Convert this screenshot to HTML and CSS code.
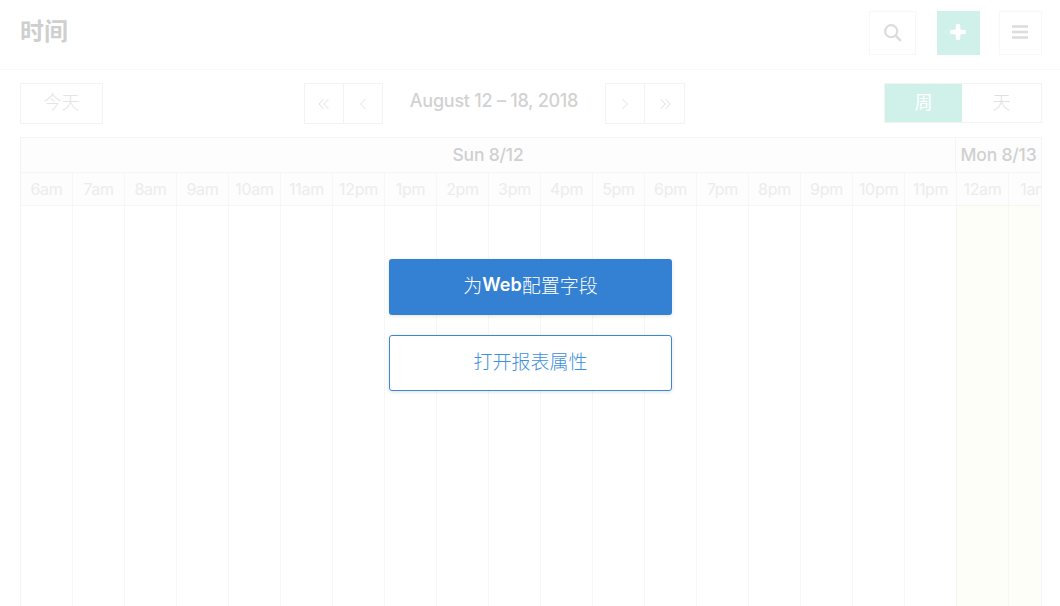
FILE: index.html
```html
<!DOCTYPE html>
<html lang="zh">
<head>
  <meta charset="UTF-8">
  <title>时间</title>
  <link rel="stylesheet" href="styles.css">
</head>
<body>
  <header class="topbar">
    <h1>时间</h1>
    <div class="actions">
      <button class="icon-btn search-btn">
        <svg width="18" height="18" viewBox="0 0 18 18"><circle cx="7.200" cy="7.200" r="6" fill="none" stroke="#dcdcdc" stroke-width="2.200"/><path d="M11.600 11.600L16.800 16.800" stroke="#dcdcdc" stroke-width="2.600"/></svg>
      </button>
      <button class="icon-btn add-btn">
        <svg width="16" height="16" viewBox="0 0 16 16"><path d="M8 2v12M2 8h12" stroke="#fff" stroke-width="4.600" stroke-linecap="round"/></svg>
      </button>
      <button class="icon-btn menu-btn">
        <svg width="16" height="14" viewBox="0 0 16 14"><path d="M0 1.500h16M0 7h16M0 12.500h16" stroke="#dcdcdc" stroke-width="2.600"/></svg>
      </button>
    </div>
  </header>

  <div class="toolbar">
    <button class="today-btn">今天</button>
    <div class="date-nav">
      <div class="btn-group">
        <button class="nav-btn"><svg width="12" height="12" viewBox="0 0 12 12"><path d="M5.500 1L1 6l4.500 5M10.500 1L6 6l4.500 5" class="chev"/></svg></button>
        <button class="nav-btn"><svg width="12" height="12" viewBox="0 0 12 12"><path d="M8.500 1L3.500 6l5 5" class="chev"/></svg></button>
      </div>
      <span class="date-range">August 12 – 18, 2018</span>
      <div class="btn-group next-group">
        <button class="nav-btn"><svg width="12" height="12" viewBox="0 0 12 12"><path d="M3.500 1L8.500 6l-5 5" class="chev"/></svg></button>
        <button class="nav-btn"><svg width="12" height="12" viewBox="0 0 12 12"><path d="M1.500 1L6 6l-4.500 5M6.500 1L11 6l-4.500 5" class="chev"/></svg></button>
      </div>
    </div>
    <div class="view-switch">
      <button class="view-btn active">周</button>
      <button class="view-btn">天</button>
    </div>
  </div>

  <div class="calendar">
    <div class="day-row">
      <div class="day sun">Sun 8/12</div>
      <div class="day mon">Mon 8/13</div>
    </div>
    <div class="hour-row" id="hours"></div>
    <div class="body-row" id="cols"></div>
  </div>

  <div class="overlay">
    <button class="primary-btn">为<b>Web</b>配置字段</button>
    <button class="outline-btn">打开报表属性</button>
  </div>

  <script>
    const hours = ['6am','7am','8am','9am','10am','11am','12pm','1pm','2pm','3pm','4pm','5pm','6pm','7pm','8pm','9pm','10pm','11pm','12am','1am'];
    const hourRow = document.getElementById('hours');
    const cols = document.getElementById('cols');

    hours.forEach((h, i) => {
      const cell = document.createElement('div');
      cell.className = 'hour';
      cell.textContent = h;
      hourRow.appendChild(cell);

      const col = document.createElement('div');
      col.className = i >= 18 ? 'col next-day' : 'col';
      cols.appendChild(col);
    });
  </script>
</body>
</html>
```
FILE: styles.css
```css
* {
  box-sizing: border-box;
}
html, body {
  height: 100%;
}
body {
  margin: 0;
  overflow: hidden;
  display: flex;
  flex-direction: column;
  background: #fff;
  font-family: Inter, "Noto Sans CJK SC", sans-serif;
  color: #d0d0d0;
}
button {
  font-family: inherit;
  background: #fff;
  padding: 0;
  display: flex;
  align-items: center;
  justify-content: center;
}
.topbar {
  height: 70px;
  flex: none;
  border-bottom: 1px solid #f7f7f7;
  display: flex;
  justify-content: space-between;
  padding: 11px 18px 0 20px;
}
h1 {
  margin: 0;
  font-size: 24px;
  line-height: 42px;
  font-weight: 700;
  color: #cfcfcf;
}
.actions {
  display: flex;
  align-items: flex-start;
}
.icon-btn {
  height: 44px;
  border: 1px solid #f7f7f7;
}
.search-btn {
  width: 47px;
}
.add-btn {
  width: 43px;
  margin-left: 21px;
  background: #d0f1ea;
  border-color: #d0f1ea;
  padding: 0 2px 2px 0;
}
.menu-btn {
  width: 43px;
  margin-left: 19px;
  padding: 0 2px 2px 0;
}
.toolbar {
  flex: none;
  height: 41px;
  margin-top: 13px;
  padding: 0 18px 0 20px;
  display: flex;
  align-items: flex-start;
  position: relative;
}
.today-btn {
  width: 83px;
  height: 41px;
  border: 1px solid #f3f3f3;
  padding-bottom: 5px;
  font-size: 18px;
  font-weight: 300;
  color: #e4e4e4;
}
.date-nav {
  display: flex;
  align-items: flex-start;
  margin-left: 201px;
}
.btn-group {
  display: flex;
}
.nav-btn {
  width: 40px;
  height: 41px;
  border: 1px solid #f3f3f3;
}
.nav-btn + .nav-btn {
  width: 39px;
  border-left: 0;
}
.next-group .nav-btn + .nav-btn {
  width: 40px;
}
.chev {
  fill: none;
  stroke: #e2e2e2;
  stroke-width: 1;
}
.date-range {
  width: 222px;
  text-align: center;
  font-size: 18px;
  line-height: 36px;
  letter-spacing: -0.25px;
  font-weight: 500;
  color: #d2d2d2;
  white-space: nowrap;
}
.view-switch {
  display: flex;
  width: 158px;
  height: 40px;
  margin-left: auto;
  border: 1px solid #f3f3f3;
}
.view-btn {
  flex: 1;
  border: 0;
  padding-bottom: 5px;
  font-size: 18px;
  font-weight: 300;
  color: #e0e0e0;
}
.view-btn.active {
  flex: none;
  width: 77px;
  background: #d0f1ea;
  color: #fff;
  font-weight: 400;
}
.calendar {
  flex: 1;
  margin: 13px 18px 0 20px;
  border-left: 1px solid #f5f5f5;
  border-right: 1px solid #f5f5f5;
  display: flex;
  flex-direction: column;
  overflow: hidden;
  min-height: 0;
}
.day-row {
  flex: none;
  height: 36px;
  display: flex;
  border-top: 1px solid #f5f5f5;
  border-bottom: 1px solid #f5f5f5;
  background: #fdfdfd;
}
.day {
  text-align: center;
  font-size: 17.500px;
  line-height: 34px;
  letter-spacing: -0.2px;
  font-weight: 500;
  color: #d0d0d0;
}
.sun {
  flex: none;
  width: 935px;
  border-right: 1px solid #f5f5f5;
}
.mon {
  flex: none;
  width: 85px;
  white-space: nowrap;
}
.hour-row, .body-row {
  display: flex;
  background: #fdfdfd;
}
.hour-row {
  flex: none;
  height: 33px;
  border-bottom: 1px solid #f5f5f5;
}
.body-row {
  flex: 1;
  background: #fff;
}
.hour, .col {
  flex: none;
  width: 52px;
  border-right: 1px solid #f6f6f6;
}
.hour {
  text-align: center;
  font-size: 16px;
  line-height: 32px;
  letter-spacing: -0.3px;
  color: #ececec;
  white-space: nowrap;
}
.next-day {
  background: #fefef9;
}
.overlay {
  position: absolute;
  left: 389px;
  top: 259px;
  width: 283px;
  display: flex;
  flex-direction: column;
  gap: 20px;
}
.primary-btn, .outline-btn {
  height: 56px;
  border-radius: 3px;
  padding-bottom: 6px;
  font-size: 19px;
  font-weight: 300;
  box-shadow: 0 1px 4px rgba(0, 0, 0, 0.12);
}
.primary-btn {
  border: 0;
  background: #3480d2;
  color: #fff;
}
.primary-btn b {
  font-weight: 600;
  font-size: 18px;
}
.outline-btn {
  border: 1px solid #3b86d8;
  background: #fff;
  color: #3d8fe0;
}
```
